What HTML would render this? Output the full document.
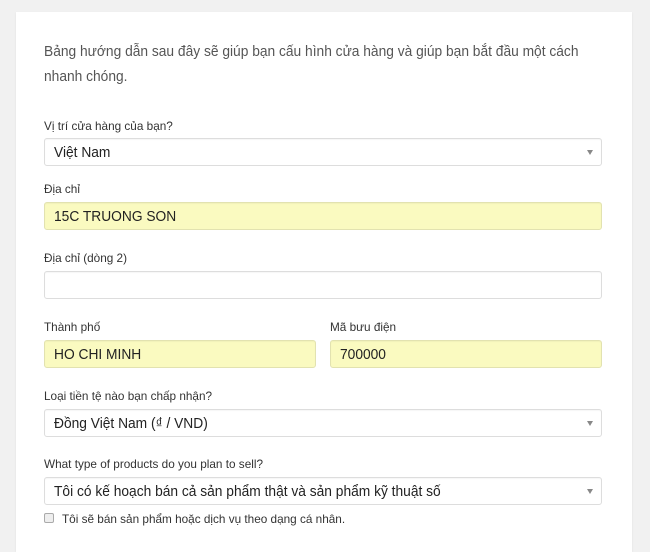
<!DOCTYPE html>
<html><head><meta charset="utf-8"><style>
*{box-sizing:border-box;margin:0;padding:0}
body{width:650px;height:537px;background:#f1f1f1;font-family:"Liberation Sans",sans-serif;position:relative;overflow:hidden}
.card{position:absolute;left:16px;top:12px;width:616px;height:540px;background:#fff;box-shadow:0 1px 2px rgba(0,0,0,.08)}
.s{display:inline-block;white-space:nowrap;transform:scaleX(.95);transform-origin:0 0}
.intro{position:absolute;left:44px;top:40px;font-size:14.5px;line-height:25px;color:#555;transform:scaleX(.95);transform-origin:0 0;white-space:nowrap}
.lbl{position:absolute;left:44px;font-size:12px;color:#333}
.lbl .s{transform:scaleX(.98)}
.f{position:absolute;height:28px;border:1px solid #ddd;border-radius:3px;font-size:14.5px;color:#222;padding:6px 0 0 9px;background:#fff;box-shadow:inset 0 1px 1px rgba(0,0,0,.04)}
.y{background:#fafac0;border-color:#e2e2b0}
.arr{position:absolute;right:8px;top:11px;width:0;height:0;border-left:3.5px solid transparent;border-right:3.5px solid transparent;border-top:5px solid #888}
.cb{position:absolute;left:44px;top:513px;width:10px;height:10px;border:1px solid #aaa;border-radius:2px;background:#eee}
</style></head><body>
<div class="card"></div>
<div class="intro">Bảng hướng dẫn sau đây sẽ giúp bạn cấu hình cửa hàng và giúp bạn bắt đầu một cách<br>nhanh chóng.</div>
<div class="lbl" style="top:119px"><span class="s">Vị trí cửa hàng của bạn?</span></div>
<div class="f" style="left:44px;top:138px;width:558px"><span class="s">Việt Nam</span><span class="arr"></span></div>
<div class="lbl" style="top:182px"><span class="s">Địa chỉ</span></div>
<div class="f y" style="left:44px;top:202px;width:558px"><span class="s">15C TRUONG SON</span></div>
<div class="lbl" style="top:251px"><span class="s">Địa chỉ (dòng 2)</span></div>
<div class="f" style="left:44px;top:271px;width:558px"></div>
<div class="lbl" style="top:320px"><span class="s">Thành phố</span></div>
<div class="lbl" style="top:320px;left:330px"><span class="s">Mã bưu điện</span></div>
<div class="f y" style="left:44px;top:340px;width:272px"><span class="s">HO CHI MINH</span></div>
<div class="f y" style="left:330px;top:340px;width:272px"><span class="s">700000</span></div>
<div class="lbl" style="top:389px"><span class="s">Loại tiền tệ nào bạn chấp nhận?</span></div>
<div class="f" style="left:44px;top:409px;width:558px"><span class="s">Đồng Việt Nam (₫ / VND)</span><span class="arr"></span></div>
<div class="lbl" style="top:457px"><span class="s">What type of products do you plan to sell?</span></div>
<div class="f" style="left:44px;top:477px;width:558px"><span class="s">Tôi có kế hoạch bán cả sản phẩm thật và sản phẩm kỹ thuật số</span><span class="arr"></span></div>
<div class="cb"></div>
<div class="lbl" style="top:512px;left:62px"><span class="s">Tôi sẽ bán sản phẩm hoặc dịch vụ theo dạng cá nhân.</span></div>
</body></html>
